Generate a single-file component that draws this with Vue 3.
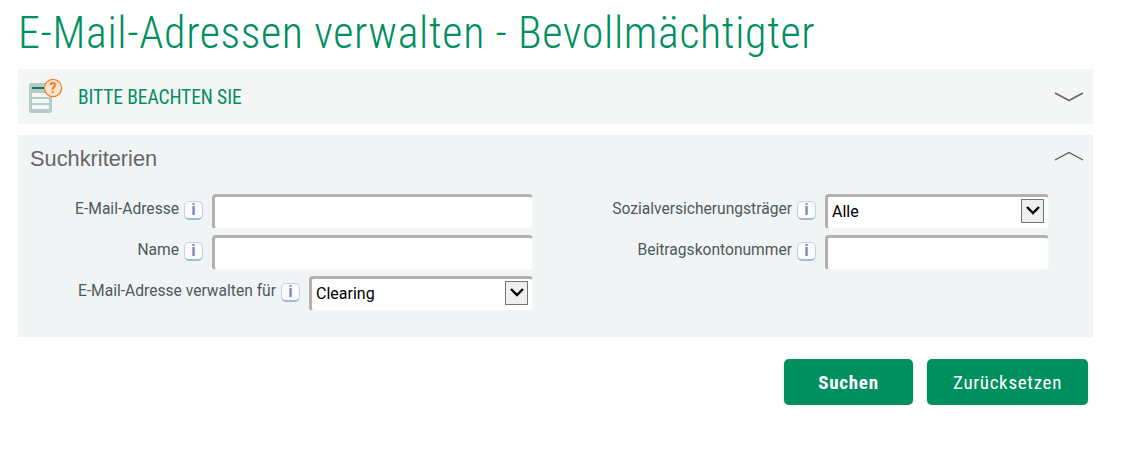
<template>
  <div class="page">
    <h1 class="title">E-Mail-Adressen verwalten - Bevollmächtigter</h1>

    <section class="notice">
      <svg class="notice-icon" width="36" height="34" viewBox="0 0 36 34">
        <rect x="0" y="4" width="23" height="30" rx="2" fill="#b5cdc9" />
        <rect x="3" y="8" width="17" height="2" fill="#1f6f60" />
        <rect x="3" y="14" width="17" height="4" fill="#f4f6f6" />
        <rect x="3" y="20" width="17" height="4" fill="#f4f6f6" />
        <rect x="3" y="26" width="17" height="4" fill="#f4f6f6" />
        <circle cx="24" cy="9" r="8.6" fill="#fde3cd" stroke="#f07a1c" stroke-width="1.2" />
        <text x="24" y="14" text-anchor="middle" class="question">?</text>
      </svg>
      <span class="notice-text">BITTE BEACHTEN SIE</span>
      <svg class="chevron-down" width="30" height="12" viewBox="0 0 30 12">
        <path d="M1 2 L15 9.5 L29 2" fill="none" stroke="#666" stroke-width="1.6" />
      </svg>
    </section>

    <section class="search">
      <div class="search-head">
        <h2>Suchkriterien</h2>
        <svg class="chevron-up" width="30" height="12" viewBox="0 0 30 12">
          <path d="M1 10 L15 2.5 L29 10" fill="none" stroke="#555" stroke-width="1.2" />
        </svg>
      </div>
      <div class="fields">
        <div class="col col-left">
          <div v-for="f in leftFields" :key="f.label" class="row">
            <label>{{ f.label }}</label>
            <span class="info">i</span>
            <div v-if="f.select" class="select">
              <span>{{ f.select }}</span>
              <span class="arrow">
                <svg width="16" height="11" viewBox="0 0 16 11">
                  <path d="M2 2 L8 8 L14 2" fill="none" stroke="#000" stroke-width="2.4" />
                </svg>
              </span>
            </div>
            <input v-else class="input input-wide" type="text" />
          </div>
        </div>
        <div class="col col-right">
          <div v-for="f in rightFields" :key="f.label" class="row">
            <label>{{ f.label }}</label>
            <span class="info">i</span>
            <div v-if="f.select" class="select">
              <span>{{ f.select }}</span>
              <span class="arrow">
                <svg width="16" height="11" viewBox="0 0 16 11">
                  <path d="M2 2 L8 8 L14 2" fill="none" stroke="#000" stroke-width="2.4" />
                </svg>
              </span>
            </div>
            <input v-else class="input input-right" type="text" />
          </div>
        </div>
      </div>
    </section>

    <div class="actions">
      <button class="btn btn-primary" type="button">Suchen</button>
      <button class="btn btn-reset" type="button">Zurücksetzen</button>
    </div>
  </div>
</template>

<script setup>
const leftFields = [
  { label: 'E-Mail-Adresse' },
  { label: 'Name' },
  { label: 'E-Mail-Adresse verwalten für', select: 'Clearing' },
];

const rightFields = [
  { label: 'Sozialversicherungsträger', select: 'Alle' },
  { label: 'Beitragskontonummer' },
];
</script>

<style>
html,
body {
  margin: 0;
  background: #fff;
  overflow: hidden;
}
</style>

<style scoped>
.page {
  width: 1075px;
  padding: 0 0 0 18px;
  font-family: Roboto, 'Liberation Sans', sans-serif;
}

.title {
  margin: 0;
  height: 69px;
  line-height: 66px;
  font-size: 44px;
  font-weight: 300;
  font-stretch: condensed;
  color: #008f5f;
  white-space: nowrap;
  letter-spacing: 0.63px;
}

.notice {
  height: 55px;
  display: flex;
  align-items: center;
  background: #f4f6f6;
  padding-left: 11px;
  padding-right: 9px;
}

.notice-icon {
  flex: none;
  margin-right: 13px;
  margin-top: -1px;
  overflow: visible;
}

.question {
  font-family: Roboto, sans-serif;
  font-size: 14px;
  font-weight: 700;
  fill: #f07a1c;
}

.notice-text {
  flex: 1;
  padding-top: 1px;
  font-size: 19.5px;
  font-stretch: condensed;
  color: #008f5f;
  letter-spacing: -0.1px;
}

.chevron-down {
  flex: none;
}

.search {
  margin-top: 11px;
  height: 202px;
  background: #f1f4f5;
}

.search-head {
  height: 47px;
  display: flex;
  align-items: center;
  justify-content: space-between;
  padding: 0 9px 0 12px;
}

.search-head h2 {
  margin: 0;
  font-family: 'Liberation Sans', Arial, sans-serif;
  font-size: 21.8px;
  font-weight: 400;
  color: #666;
}

.chevron-up {
  margin-top: -6px;
}

.fields {
  display: flex;
  margin-top: 12px;
}

.col {
  display: flex;
  flex-direction: column;
  gap: 6px;
}

.col-left {
  width: 515px;
}

.col-right {
  width: 516px;
}

.row {
  height: 35px;
  display: flex;
  justify-content: flex-end;
  align-items: flex-start;
}

label {
  font-size: 15.6px;
  line-height: 30px;
  color: #4d5a5a;
  margin-right: 5px;
  white-space: nowrap;
}

.info {
  flex: none;
  box-sizing: border-box;
  width: 19px;
  height: 19px;
  margin: 7px 9px 0 0;
  border: 1px solid #c3d3e6;
  border-bottom: 2px solid #a3bad4;
  border-radius: 5px;
  background: #fafbfd;
  color: #8080b8;
  font-family: 'Liberation Sans', Arial, sans-serif;
  font-size: 16px;
  font-weight: 700;
  line-height: 16px;
  text-align: center;
}

.input,
.select {
  box-sizing: border-box;
  height: 35px;
  background: #fff;
  border-style: solid;
  border-width: 3px 1px 1px 3px;
  border-color: #b3b0ae #f8f9f9 #f6f7f8 #b3b0ae;
  border-radius: 4px;
}

.input {
  padding: 0;
  outline: none;
}

.input-wide {
  width: 321px;
}

.input-right {
  width: 224px;
}

.select {
  width: 224px;
  display: flex;
  align-items: center;
  justify-content: space-between;
  padding: 0 4px 2px 4px;
  font-family: Roboto, 'Liberation Sans', sans-serif;
  font-size: 16px;
  color: #000;
}

.arrow {
  box-sizing: border-box;
  width: 23px;
  height: 24px;
  margin-top: -2px;
  display: flex;
  align-items: center;
  justify-content: center;
  border: 1px solid #767676;
  background: #efefef;
}

.actions {
  display: flex;
  justify-content: flex-end;
  gap: 14px;
  margin-top: 22px;
  padding-right: 5px;
}

.btn {
  height: 46px;
  border: none;
  border-radius: 5px;
  background: #008f5f;
  color: #fff;
  font-family: Roboto, sans-serif;
  font-size: 19px;
  font-stretch: condensed;
  box-shadow: 0 1px 3px rgba(0, 0, 0, 0.2);
  padding: 0;
}

.btn-primary {
  width: 129px;
  font-weight: 700;
  letter-spacing: 0.75px;
}

.btn-reset {
  width: 161px;
  letter-spacing: 0.7px;
}
</style>
